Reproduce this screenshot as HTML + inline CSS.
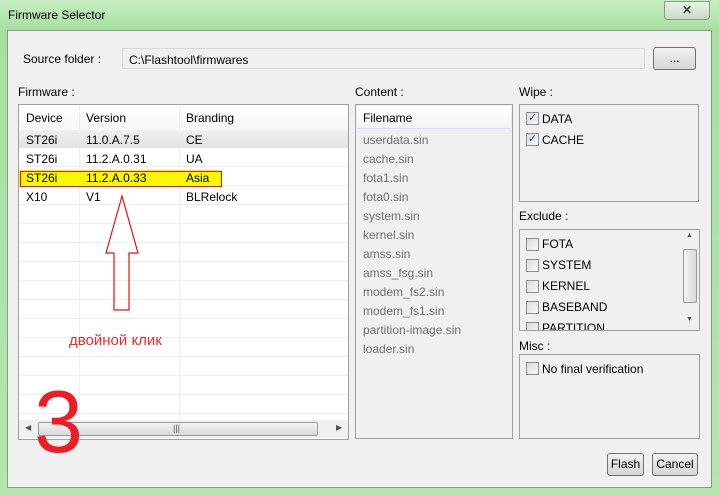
<!DOCTYPE html>
<html><head><meta charset="utf-8"><style>
*{box-sizing:border-box;margin:0;padding:0}
body{width:719px;height:496px;overflow:hidden;position:relative;font-family:"Liberation Sans",sans-serif;font-size:12px;color:#000;background:#9fd89a}
.a{position:absolute}
.frame{left:0;top:0;width:719px;height:496px;background:linear-gradient(180deg,#c8eec4 0,#a6e0a0 30px,#b4e6ae 100%)}
.client{left:7px;top:30px;width:705px;height:458px;background:#f0f0f0;border:1px solid #8a9a88}
.box{border:1px solid #a0a0a0;background:#f0f0f0}
.btn{border:1px solid #707070;border-radius:3px;background:linear-gradient(#f2f2f2,#e3e3e3 50%,#d6d6d6);text-align:center;line-height:21px}
.cb{width:13px;height:13px;border:1px solid #8f8f8f;background:linear-gradient(135deg,#dcdcdc,#f7f7f7)}
.grid{left:19px;top:129px;width:329px;height:290px;background-color:#fff;background-image:repeating-linear-gradient(180deg,transparent 0 18px,#eceef2 18px 19px)}
</style></head><body>
<div class="a frame"></div>
<div class="a" style="left:8px;top:8px;font-size:12px">Firmware Selector</div>
<div class="a" style="left:664px;top:1px;width:46px;height:19px;border:1px solid #8a9a88;border-radius:0 0 4px 4px;background:linear-gradient(#e8f3e6,#c9dcc6);text-align:center;font-weight:bold;color:#444;line-height:17px">✕</div>
<div class="a client"></div>
<div class="a" style="left:23px;top:52px">Source folder :</div>
<div class="a" style="left:122px;top:48px;width:523px;height:21px;border:1px solid #d8d8d8;background:#f0f0f0;padding:4px 6px">C:\Flashtool\firmwares</div>
<div class="a btn" style="left:653px;top:47px;width:43px;height:23px">...</div>

<div class="a" style="left:18px;top:85px">Firmware :</div>
<div class="a box" style="left:18px;top:104px;width:331px;height:336px;background:#fff"></div>
<div class="a grid"></div>
<div class="a" style="left:19px;top:105px;width:329px;height:24px;background:linear-gradient(#fff,#f5f6f7)"></div>
<div class="a" style="left:79px;top:106px;width:1px;height:313px;background:#eceef2"></div>
<div class="a" style="left:179px;top:106px;width:1px;height:313px;background:#eceef2"></div>
<div class="a" style="left:26px;top:111px">Device</div><div class="a" style="left:86px;top:111px">Version</div><div class="a" style="left:186px;top:111px">Branding</div>
<div class="a" style="left:19px;top:130px;width:329px;height:18px;background:linear-gradient(#f0f0f0,#e2e2e2)"></div>
<div class="a" style="left:19px;top:170px;width:202px;height:17px;background:#f8f800"></div>
<div class="a" style="left:20px;top:171px;width:202px;height:16px;border:1px solid #e81010"></div>
<div class="a" style="left:26px;top:133px">ST26i</div><div class="a" style="left:86px;top:133px">11.0.A.7.5</div><div class="a" style="left:186px;top:133px">CE</div>
<div class="a" style="left:26px;top:152px">ST26i</div><div class="a" style="left:86px;top:152px">11.2.A.0.31</div><div class="a" style="left:186px;top:152px">UA</div>
<div class="a" style="left:26px;top:171px">ST26i</div><div class="a" style="left:86px;top:171px">11.2.A.0.33</div><div class="a" style="left:186px;top:171px">Asia</div>
<div class="a" style="left:26px;top:190px">X10</div><div class="a" style="left:86px;top:190px">V1</div><div class="a" style="left:186px;top:190px">BLRelock</div>
<div class="a" style="left:19px;top:420px;width:329px;height:18px;background:#f0f0f0"></div>
<div class="a" style="left:38px;top:422px;width:280px;height:14px;border:1px solid #999;border-radius:2px;background:linear-gradient(#f4f4f4,#d8d8d8)"></div>
<div class="a" style="left:25px;top:423px;font-size:8px;color:#555">◀</div><div class="a" style="left:336px;top:423px;font-size:8px;color:#555">▶</div>
<div class="a" style="left:173px;top:423px;font-size:9px;color:#555">|||</div>
<svg class="a" style="left:0;top:0" width="719" height="496"><path d="M122 196 L106 253 L114 253 L114 310 L129 310 L129 253 L138 253 Z" fill="none" stroke="#e81010" stroke-width="1.2"/></svg>
<div class="a" style="left:69px;top:332px;font-size:15px;color:#ee2a2a">двойной клик</div>
<div class="a" style="left:34px;top:378px;font-size:88px;color:#ee1c24;line-height:1">3</div>

<div class="a" style="left:355px;top:85px">Content :</div>
<div class="a box" style="left:355px;top:104px;width:158px;height:335px"></div>
<div class="a" style="left:357px;top:106px;width:154px;height:23px;background:linear-gradient(#fff,#f3f4f6);border-bottom:1px solid #dde"></div>
<div class="a" style="left:363px;top:111px">Filename</div>
<div class="a" style="left:363px;top:131px;color:#6d6d6d;line-height:19px">userdata.sin<br>cache.sin<br>fota1.sin<br>fota0.sin<br>system.sin<br>kernel.sin<br>amss.sin<br>amss_fsg.sin<br>modem_fs2.sin<br>modem_fs1.sin<br>partition-image.sin<br>loader.sin</div>

<div class="a" style="left:519px;top:85px">Wipe :</div>
<div class="a box" style="left:519px;top:104px;width:180px;height:98px"></div>
<div class="a cb" style="left:526px;top:112px;color:#2a4a9a;font-size:11px;line-height:11px;text-align:center">✓</div><div class="a" style="left:542px;top:112px">DATA</div>
<div class="a cb" style="left:526px;top:133px;color:#2a4a9a;font-size:11px;line-height:11px;text-align:center">✓</div><div class="a" style="left:542px;top:133px">CACHE</div>

<div class="a" style="left:519px;top:209px">Exclude :</div>
<div class="a box" style="left:519px;top:229px;width:181px;height:102px;overflow:hidden">
<div class="a cb" style="left:6px;top:8px"></div><div class="a" style="left:22px;top:7px">FOTA</div>
<div class="a cb" style="left:6px;top:29px"></div><div class="a" style="left:22px;top:28px">SYSTEM</div>
<div class="a cb" style="left:6px;top:50px"></div><div class="a" style="left:22px;top:49px">KERNEL</div>
<div class="a cb" style="left:6px;top:71px"></div><div class="a" style="left:22px;top:70px">BASEBAND</div>
<div class="a cb" style="left:6px;top:92px"></div><div class="a" style="left:22px;top:91px">PARTITION</div>
<div class="a" style="left:162px;top:0;width:17px;height:100px;background:#f0f0f0"></div>
<div class="a" style="left:163px;top:19px;width:14px;height:54px;border:1px solid #999;border-radius:2px;background:linear-gradient(90deg,#f4f4f4,#d8d8d8)"></div>
<div class="a" style="left:166px;top:2px;font-size:7px;color:#555">▲</div><div class="a" style="left:166px;top:86px;font-size:7px;color:#555">▼</div>
</div>

<div class="a" style="left:519px;top:339px">Misc :</div>
<div class="a box" style="left:519px;top:354px;width:181px;height:85px"></div>
<div class="a cb" style="left:526px;top:362px"></div><div class="a" style="left:542px;top:362px">No final verification</div>

<div class="a btn" style="left:607px;top:453px;width:37px;height:23px">Flash</div>
<div class="a btn" style="left:652px;top:453px;width:46px;height:23px">Cancel</div>
</body></html>
